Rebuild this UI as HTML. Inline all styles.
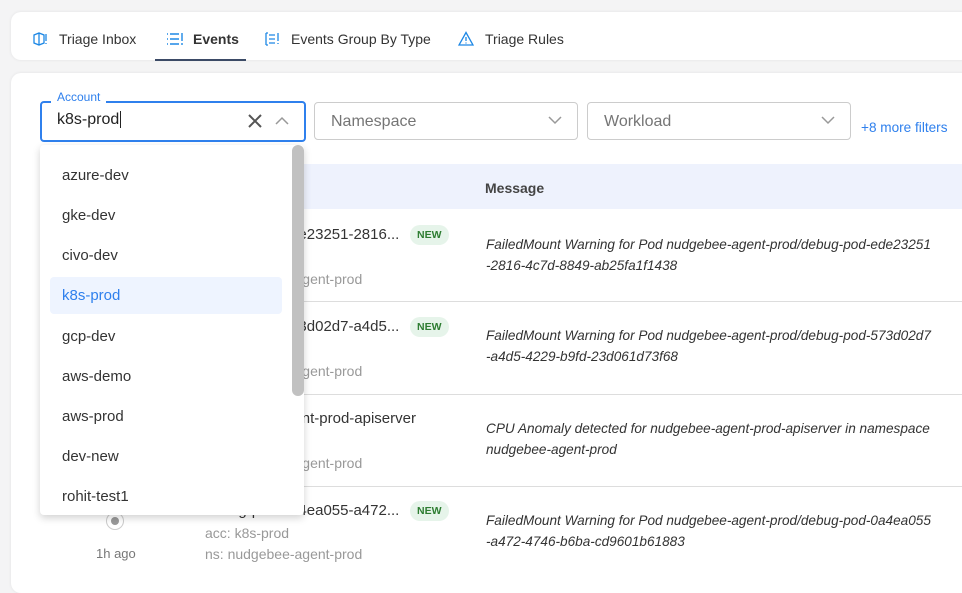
<!DOCTYPE html>
<html><head><style>
body{margin:0;width:962px;height:572px;overflow:hidden;background:#f4f4f5;font-family:"Liberation Sans",sans-serif;position:relative}
.a{position:absolute}
.card{background:#fff;border-radius:10px;box-shadow:0 0 3px rgba(0,0,0,.08)}
.tab{top:31px;font-size:14px;color:#333}
.sel{border:1px solid #ccc;border-radius:4px;height:36px;background:#fff}
.ph{font-size:16px;color:#757575}
.row{left:40px;width:922px;border-bottom:1px solid #ddd}
.t{font-size:15px;color:#333;white-space:nowrap}
.g{font-size:14px;color:#999;white-space:nowrap}
.m{font-size:13.6px;font-style:italic;color:#333;line-height:21px;left:486px;white-space:nowrap}
.new{background:#e6f4ea;color:#2e7d32;font-size:10.5px;font-weight:bold;border-radius:11px;padding:4px 7px}
.opt{left:62px;font-size:15px;color:#333}
</style></head><body>
<div class="a card" style="left:11px;top:12px;width:970px;height:48px"></div>
<svg class="a" style="left:32px;top:31px" width="16" height="16" viewBox="0 0 16 16" fill="none" stroke="#1e88e5" stroke-width="1.3"><path d="M2 4l5-2 5 2v8l-5 2-5-2z M7 2v12"/><path d="M14 3v7M14 12v1"/></svg>
<div class="a tab" style="left:59px">Triage Inbox</div>
<svg class="a" style="left:166px;top:32px" width="18" height="14" viewBox="0 0 18 14" stroke="#1e88e5" stroke-width="1.4"><path d="M1 2h1M4 2h9M1 7h1M4 7h9M1 12h1M4 12h9M16 1v8M16 11v2"/></svg>
<div class="a tab" style="left:193px;font-weight:bold;color:#333">Events</div>
<div class="a" style="left:155px;top:59px;width:91px;height:2px;background:#3b4a66"></div>
<svg class="a" style="left:264px;top:31px" width="16" height="16" viewBox="0 0 16 16" fill="none" stroke="#1e88e5" stroke-width="1.3"><path d="M2 2v12M2 2h2M2 14h2M5 4h6M5 8h6M5 12h6M14 2v8M14 12v1"/></svg>
<div class="a tab" style="left:291px">Events Group By Type</div>
<svg class="a" style="left:458px;top:31px" width="16" height="15" viewBox="0 0 16 15" fill="none" stroke="#1e88e5" stroke-width="1.3"><path d="M8 1.5L15 14H1z M8 6v4M8 11.5v1"/></svg>
<div class="a tab" style="left:485px">Triage Rules</div>

<div class="a card" style="left:11px;top:73px;width:970px;height:520px"></div>

<div class="a sel" style="left:40px;top:101px;width:262px;height:37px;border:2px solid #2f80ed;"></div>
<div class="a" style="left:51px;top:90px;background:#fff;padding:0 6px;font-size:12px;color:#2f80ed">Account</div>
<div class="a" style="left:57px;top:111px;font-size:16px;color:#222">k8s-prod<span style="border-left:1px solid #222;margin-left:1px"></span></div>
<svg class="a" style="left:247px;top:113px" width="16" height="16" stroke="#555" stroke-width="2"><path d="M2 2l12 12M14 2L2 14"/></svg>
<svg class="a" style="left:275px;top:116px" width="14" height="9" fill="none" stroke="#999" stroke-width="1.5"><path d="M1 8l6-6 6 6"/></svg>

<div class="a sel" style="left:314px;top:102px;width:262px"></div>
<div class="a ph" style="left:331px;top:113px">Namespace</div>
<svg class="a" style="left:548px;top:116px" width="14" height="9" fill="none" stroke="#999" stroke-width="1.5"><path d="M1 1l6 6 6-6"/></svg>
<div class="a sel" style="left:587px;top:102px;width:262px"></div>
<div class="a ph" style="left:604px;top:113px">Workload</div>
<svg class="a" style="left:821px;top:116px" width="14" height="9" fill="none" stroke="#999" stroke-width="1.5"><path d="M1 1l6 6 6-6"/></svg>
<div class="a" style="left:861px;top:120px;font-size:13.6px;color:#2f80ed">+8 more filters</div>

<div class="a" style="left:40px;top:164px;width:922px;height:45px;background:#eef2fd"></div>
<div class="a" style="left:485px;top:180px;font-size:14px;font-weight:bold;color:#444">Message</div>

<div class="a row" style="top:209px;height:92px"></div>
<div class="a row" style="top:302px;height:92px"></div>
<div class="a row" style="top:395px;height:91px"></div>

<div class="a t" style="left:205px;top:226px">debug-pod-ede23251-2816...</div>
<div class="a new" style="left:410px;top:225px">NEW</div>
<div class="a g" style="left:205px;top:271px">ns: nudgebee-agent-prod</div>
<div class="a m" style="top:234px">FailedMount Warning for Pod nudgebee-agent-prod/debug-pod-ede23251<br>-2816-4c7d-8849-ab25fa1f1438</div>

<div class="a t" style="left:205px;top:318px">debug-pod-573d02d7-a4d5...</div>
<div class="a new" style="left:410px;top:317px">NEW</div>
<div class="a g" style="left:205px;top:363px">ns: nudgebee-agent-prod</div>
<div class="a m" style="top:325px">FailedMount Warning for Pod nudgebee-agent-prod/debug-pod-573d02d7<br>-a4d5-4229-b9fd-23d061d73f68</div>

<div class="a t" style="left:205px;top:410px">nudgebee-agent-prod-apiserver</div>
<div class="a g" style="left:205px;top:455px">ns: nudgebee-agent-prod</div>
<div class="a m" style="top:418px">CPU Anomaly detected for nudgebee-agent-prod-apiserver in namespace<br>nudgebee-agent-prod</div>

<div class="a t" style="left:205px;top:502px">debug-pod-0a4ea055-a472...</div>
<div class="a new" style="left:410px;top:501px">NEW</div>
<div class="a g" style="left:205px;top:525px">acc: k8s-prod</div>
<div class="a g" style="left:205px;top:546px">ns: nudgebee-agent-prod</div>
<div class="a m" style="top:510px">FailedMount Warning for Pod nudgebee-agent-prod/debug-pod-0a4ea055<br>-a472-4746-b6ba-cd9601b61883</div>
<div class="a" style="left:106px;top:512px;width:18px;height:18px;border:1.5px solid #ccc;border-radius:50%;box-sizing:border-box"></div>
<div class="a" style="left:111px;top:517px;width:8px;height:8px;background:#999;border-radius:50%"></div>
<div class="a" style="left:96px;top:546px;font-size:13px;color:#777">1h ago</div>

<div class="a" style="left:40px;top:145px;width:264px;height:370px;background:#fff;border-radius:4px;box-shadow:0 3px 8px rgba(0,0,0,.18)"></div>
<div class="a" style="left:292px;top:145px;width:12px;height:251px;background:#c1c1c1;border-radius:6px"></div>
<div class="a" style="left:50px;top:277px;width:232px;height:37px;background:#eef4ff;border-radius:4px"></div>
<div class="a opt" style="top:167px">azure-dev</div>
<div class="a opt" style="top:207px">gke-dev</div>
<div class="a opt" style="top:247px">civo-dev</div>
<div class="a opt" style="top:287px;color:#2f80ed">k8s-prod</div>
<div class="a opt" style="top:328px">gcp-dev</div>
<div class="a opt" style="top:368px">aws-demo</div>
<div class="a opt" style="top:408px">aws-prod</div>
<div class="a opt" style="top:448px">dev-new</div>
<div class="a opt" style="top:488px">rohit-test1</div>
</body></html>
